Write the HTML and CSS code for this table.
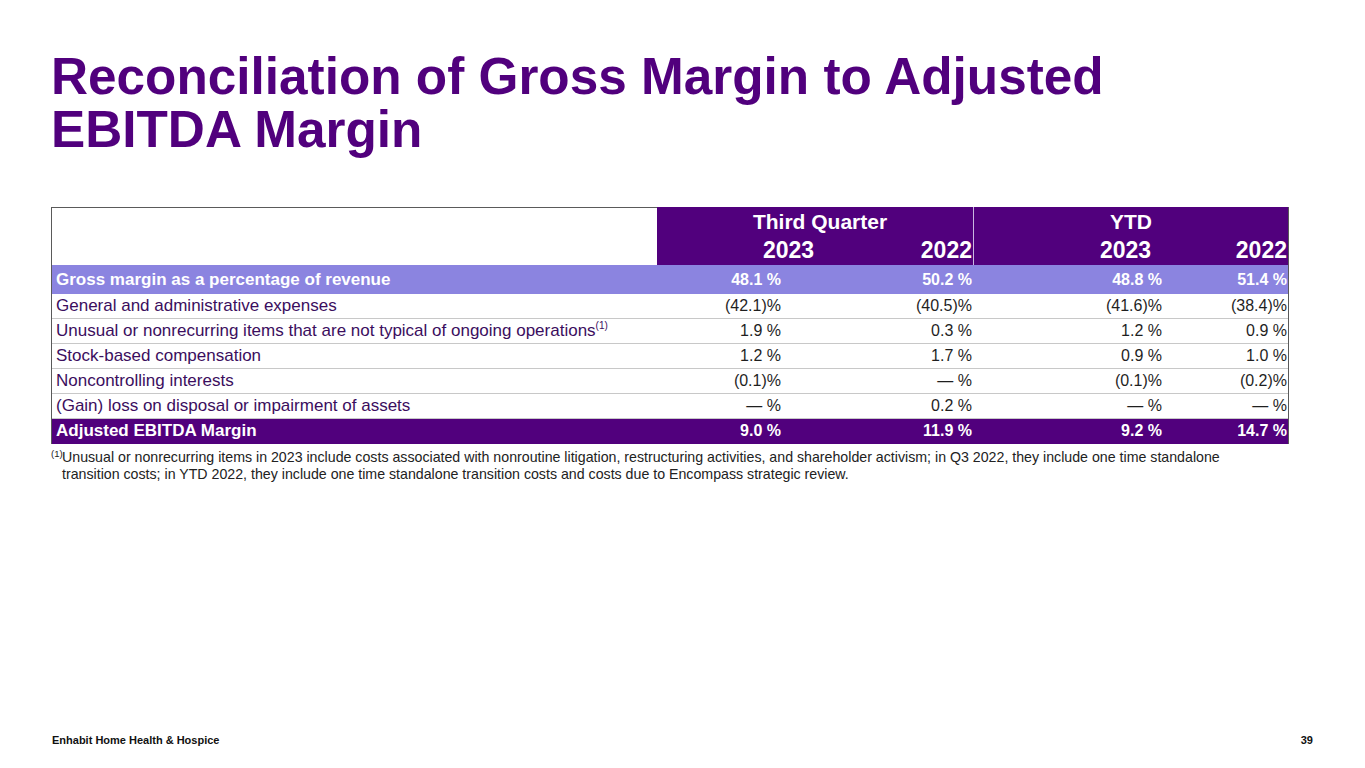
FILE: index.html
```html
<!DOCTYPE html>
<html lang="en">
<head>
<meta charset="utf-8">
<title>Reconciliation of Gross Margin to Adjusted EBITDA Margin</title>
<link rel="stylesheet" href="styles.css">
</head>
<body>
<main class="slide">
  <h1 class="title">Reconciliation of Gross Margin to Adjusted<br>EBITDA Margin</h1>

  <div class="table">
    <div class="thead">
      <div class="corner"></div>
      <div class="hgroup q">
        <div class="hgroup-title">Third Quarter</div>
        <div class="years"><span>2023</span><span>2022</span></div>
      </div>
      <div class="hgroup ytd">
        <div class="hgroup-title">YTD</div>
        <div class="years"><span>2023</span><span>2022</span></div>
      </div>
    </div>

    <div class="row gross">
      <div class="label">Gross margin as a percentage of revenue</div>
      <div class="v v1">48.1 %</div><div class="v v2">50.2 %</div><div class="v v3">48.8 %</div><div class="v v4">51.4 %</div>
    </div>
    <div class="row">
      <div class="label">General and administrative expenses</div>
      <div class="v v1">(42.1)%</div><div class="v v2">(40.5)%</div><div class="v v3">(41.6)%</div><div class="v v4">(38.4)%</div>
    </div>
    <div class="row">
      <div class="label">Unusual or nonrecurring items that are not typical of ongoing operations<sup>(1)</sup></div>
      <div class="v v1">1.9 %</div><div class="v v2">0.3 %</div><div class="v v3">1.2 %</div><div class="v v4">0.9 %</div>
    </div>
    <div class="row">
      <div class="label">Stock-based compensation</div>
      <div class="v v1">1.2 %</div><div class="v v2">1.7 %</div><div class="v v3">0.9 %</div><div class="v v4">1.0 %</div>
    </div>
    <div class="row">
      <div class="label">Noncontrolling interests</div>
      <div class="v v1">(0.1)%</div><div class="v v2">— %</div><div class="v v3">(0.1)%</div><div class="v v4">(0.2)%</div>
    </div>
    <div class="row">
      <div class="label">(Gain) loss on disposal or impairment of assets</div>
      <div class="v v1">— %</div><div class="v v2">0.2 %</div><div class="v v3">— %</div><div class="v v4">— %</div>
    </div>
    <div class="row total">
      <div class="label">Adjusted EBITDA Margin</div>
      <div class="v v1">9.0 %</div><div class="v v2">11.9 %</div><div class="v v3">9.2 %</div><div class="v v4">14.7 %</div>
    </div>
  </div>

  <div class="footnote">
    <sup class="fn-mark">(1)</sup>
    <p class="fn-text">Unusual or nonrecurring items in 2023 include costs associated with nonroutine litigation, restructuring activities, and shareholder activism; in Q3 2022, they include one time standalone transition costs; in YTD 2022, they include one time standalone transition costs and costs due to Encompass strategic review.</p>
  </div>

  <footer class="footer">
    <span>Enhabit Home Health &amp; Hospice</span>
    <span>39</span>
  </footer>
</main>
</body>
</html>
```

FILE: styles.css
```css
* { box-sizing: border-box; }

html, body {
  margin: 0;
  padding: 0;
  background: #ffffff;
}

body {
  font-family: "Liberation Sans", Arial, sans-serif;
}

.slide {
  width: 1365px;
  height: 768px;
  display: flex;
  flex-direction: column;
  padding-left: 51px;
  overflow: hidden;
}

.title {
  margin: 50px 0 0 0;
  font-size: 51.3px;
  line-height: 53px;
  font-weight: 700;
  color: #51007d;
}

.table {
  margin-top: 51px;
  width: 1238px;
  border-left: 1px solid #5a5a5a;
  border-right: 1px solid #5a5a5a;
  border-top: 1px solid #5a5a5a;
}

.thead {
  display: grid;
  grid-template-columns: 605px 316px 315px;
  height: 58px;
  margin-top: -1px;
}

.corner {
  border-top: 1px solid #5a5a5a;
  background: #ffffff;
}

.hgroup {
  background: #51007d;
  color: #ffffff;
  font-weight: 700;
  font-size: 21px;
}

.hgroup.ytd {
  border-left: 1px solid #c9b8e0;
}

.hgroup-title {
  height: 29px;
  line-height: 30px;
  text-align: center;
}

.hgroup.q .hgroup-title { padding-left: 10px; }

.years {
  height: 29px;
  line-height: 29px;
  font-size: 23px;
  display: flex;
  justify-content: space-between;
}

.hgroup.q .years { padding: 0 1px 0 106px; }
.hgroup.ytd .years { padding: 0 1px 0 126px; }

.row {
  display: grid;
  grid-template-columns: 605px 133px 183px 192px 123px;
  height: 25px;
  line-height: 24px;
  font-size: 16px;
  border-bottom: 1px solid #c8c8c8;
  color: #1f1f1f;
}

.row .label {
  padding-left: 4px;
  font-size: 17px;
  color: #3b0e5e;
  white-space: nowrap;
}

.row .label sup {
  font-size: 10px;
  line-height: 0;
  vertical-align: 7px;
}

.v { text-align: right; white-space: nowrap; }
.v1 { padding-right: 9px; }
.v2 { padding-right: 1px; }
.v3 { padding-right: 3px; }
.v4 { padding-right: 1px; }

.row.gross {
  height: 29px;
  line-height: 29px;
  background: #8b84e0;
  border-bottom: none;
  font-weight: 700;
}

.row.gross .label,
.row.gross .v,
.row.total .label,
.row.total .v {
  color: #ffffff;
}

.row.total {
  background: #51007d;
  font-weight: 700;
  border-bottom: none;
}

.footnote {
  display: flex;
  margin-top: 5px;
  width: 1215px;
  font-size: 14.2px;
  line-height: 17px;
  color: #222222;
}

.fn-mark {
  font-size: 9.5px;
  line-height: 0;
  vertical-align: 0;
  margin-top: 5px;
  width: 11px;
  flex: none;
}

.fn-text {
  margin: 0;
}

.footer {
  margin-top: auto;
  display: flex;
  justify-content: space-between;
  padding: 0 52px 21px 1px;
  font-size: 11px;
  line-height: 13px;
  font-weight: 700;
  color: #111111;
}
```
